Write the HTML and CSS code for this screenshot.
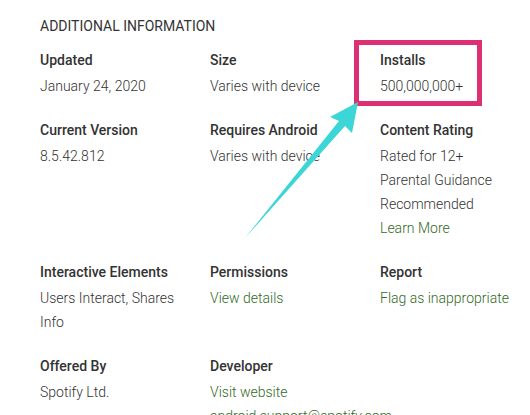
FILE: index.html
```html
<!DOCTYPE html>
<html>
<head>
<meta charset="utf-8">
<link rel="stylesheet" href="styles.css">
</head>
<body>
<div class="page">
  <h2 class="title">Additional Information</h2>
  <div class="grid">
    <div class="cell"><div class="label">Updated</div><div class="value">January 24, 2020</div></div>
    <div class="cell"><div class="label">Size</div><div class="value">Varies with device</div></div>
    <div class="cell"><div class="label">Installs</div><div class="value">500,000,000+</div></div>

    <div class="cell"><div class="label">Current Version</div><div class="value">8.5.42.812</div></div>
    <div class="cell"><div class="label">Requires Android</div><div class="value">Varies with device</div></div>
    <div class="cell"><div class="label">Content Rating</div><div class="value">Rated for 12+</div><div class="value">Parental Guidance Recommended</div><div class="value"><a class="link">Learn More</a></div></div>

    <div class="cell"><div class="label">Interactive Elements</div><div class="value">Users Interact, Shares Info</div></div>
    <div class="cell"><div class="label">Permissions</div><div class="value"><a class="link">View details</a></div></div>
    <div class="cell"><div class="label">Report</div><div class="value"><a class="link">Flag as inappropriate</a></div></div>

    <div class="cell"><div class="label">Offered By</div><div class="value">Spotify Ltd.</div></div>
    <div class="cell"><div class="label">Developer</div><div class="value"><a class="link">Visit website</a></div><div class="value"><a class="link">android.support@spotify.com</a></div><div class="value"><a class="link">Privacy Policy</a></div></div>
    <div class="cell"></div>
  </div>
  <svg class="annot" width="530" height="415" viewBox="0 0 530 415">
    <rect x="356.5" y="42.5" width="123" height="61" fill="none" stroke="#dd2f73" stroke-width="5"/>
    <polygon points="358,102 330,117 339,121 245,238 345,126 352,133" fill="#3dd6d6"/>
  </svg>
</div>
</body>
</html>
```

FILE: styles.css
```css
html, body {
  margin: 0;
  padding: 0;
  background: #fff;
}
.page {
  position: relative;
  padding: 14px 0 0 40px;
  font-family: Roboto, "Liberation Sans", sans-serif;
  font-size: 14px;
  color: #333;
  height: 415px;
  overflow: hidden;
  box-sizing: border-box;
}
.title {
  margin: 0 0 10px;
  font-size: 14px;
  font-weight: 400;
  line-height: 24px;
  text-transform: uppercase;
  color: #333;
}
.grid {
  display: grid;
  grid-template-columns: 170px 170px 140px;
  row-gap: 20px;
}
.label {
  font-weight: 500;
  line-height: 24px;
  margin-bottom: 2px;
}
.value {
  line-height: 24px;
  font-weight: 300;
  color: #333;
  padding-right: 20px;
}
.cell:nth-child(3n) .value {
  padding-right: 0;
}
.link {
  color: #33691e;
  text-decoration: none;
}
.annot {
  position: absolute;
  left: 0;
  top: 0;
}
```
